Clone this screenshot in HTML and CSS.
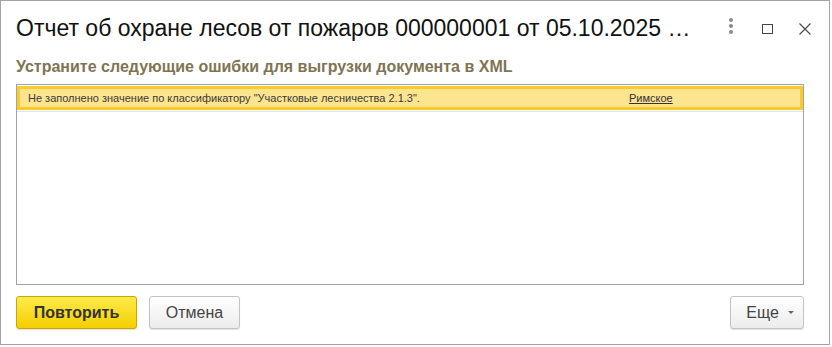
FILE: index.html
```html
<!DOCTYPE html>
<html lang="ru">

<head>
	<meta charset="UTF-8">
	<title>Отчет об охране лесов</title>
	<link rel="stylesheet" href="styles.css">
</head>

<body>
	<div class="window">
		<div class="head">
			<h1 class="title">Отчет об охране лесов от пожаров 000000001 от 05.10.2025 …</h1>
			<div class="head-tools">
				<span class="tool tool-more"><i></i><i></i><i></i></span>
				<span class="tool tool-max"><b></b></span>
				<span class="tool tool-close">
					<svg width="12" height="12" viewBox="0 0 12 12"><path d="M0.5 0.5L11.5 11.5M11.5 0.5L0.5 11.5" stroke="#444" stroke-width="1.1" fill="none"/></svg>
				</span>
			</div>
		</div>
		<div class="content">
			<div class="caption">Устраните следующие ошибки для выгрузки документа в XML</div>
			<div class="grid">
				<div class="grid-row">
					<div class="grid-sel">
						<span class="cell-text">Не заполнено значение по классификатору "Участковые лесничества 2.1.3".</span>
						<a class="cell-link" href="javascript:void(0)">Римское</a>
					</div>
				</div>
			</div>
			<div class="footer">
				<a class="btn btn-default" href="javascript:void(0)">Повторить</a>
				<a class="btn" href="javascript:void(0)">Отмена</a>
				<a class="btn btn-more" href="javascript:void(0)">Еще <span class="caret"></span></a>
			</div>
		</div>
	</div>
</body>

</html>
```

FILE: styles.css
```css
* {
	margin: 0;
	padding: 0;
	box-sizing: border-box;
}

a {
	text-decoration: none;
}

body {
	background: #fff;
	font-family: "Liberation Sans", Arial, sans-serif;
	color: #333;
}

.window {
	width: 830px;
	height: 345px;
	border: 1px solid #a3a3a3;
	background: #fff;
}

/* шапка окна */
.head {
	display: flex;
	align-items: flex-start;
	padding: 13px 0 0 15px;
	height: 42px;
}

.title {
	font-size: 23px;
	font-weight: normal;
	line-height: 28px;
	color: #111;
	white-space: nowrap;
}

.head-tools {
	display: flex;
	margin-left: auto;
	padding-top: 4px;
	margin-right: 18px;
}

.tool {
	display: flex;
	align-items: center;
	justify-content: center;
	height: 16px;
}

.tool-more {
	flex-direction: column;
	width: 4px;
	margin-right: 29px;
	gap: 2px;
}

.tool-more i {
	display: block;
	width: 4px;
	height: 4px;
	border-radius: 50%;
	background: #8a8a8a;
}

.tool-max {
	width: 11px;
	margin-right: 26px;
	padding-top: 6px;
}

.tool-max b {
	display: block;
	width: 11px;
	height: 10px;
	border: 1px solid #444;
}

.tool-close {
	width: 12px;
	padding-top: 6px;
}

/* содержимое */
.content {
	padding: 15px 25px 0 15px;
}

.caption {
	font-size: 16px;
	font-weight: bold;
	line-height: 18px;
	color: #7f7452;
}

.grid {
	margin-top: 8px;
	height: 201px;
	border: 1px solid #a3a3a3;
}

.grid-row {
	height: 27px;
	padding-top: 1px;
	border-bottom: 1px solid #e3e3e3;
}

.grid-sel {
	display: flex;
	align-items: center;
	height: 24px;
	border: 3px solid #f8ca2c;
	background: #fde58f;
	font-size: 11px;
	color: #3a3a3a;
}

.cell-text {
	flex: 0 0 609px;
	padding-left: 8px;
}

.cell-link {
	color: #333;
	text-decoration: underline;
}

/* кнопки */
.footer {
	display: flex;
	margin-top: 11px;
	gap: 12px;
}

.btn {
	display: flex;
	align-items: center;
	justify-content: center;
	height: 33px;
	width: 91px;
	border: 1px solid #c3c3c3;
	border-radius: 3px;
	background: linear-gradient(#fff, #ececec);
	box-shadow: 0 1px 1px rgba(0, 0, 0, .12);
	font-size: 16px;
	color: #444;
}

.btn-default {
	width: 121px;
	border-color: #c9a700;
	background: linear-gradient(#ffea4a, #f4cf00);
	font-weight: bold;
	color: #333;
}

.btn-more {
	width: 74px;
	margin-left: auto;
	padding-left: 6px;
}

.caret {
	display: inline-block;
	margin-left: 9px;
	border-left: 3px solid transparent;
	border-right: 3px solid transparent;
	border-top: 3px solid #666;
}
```
